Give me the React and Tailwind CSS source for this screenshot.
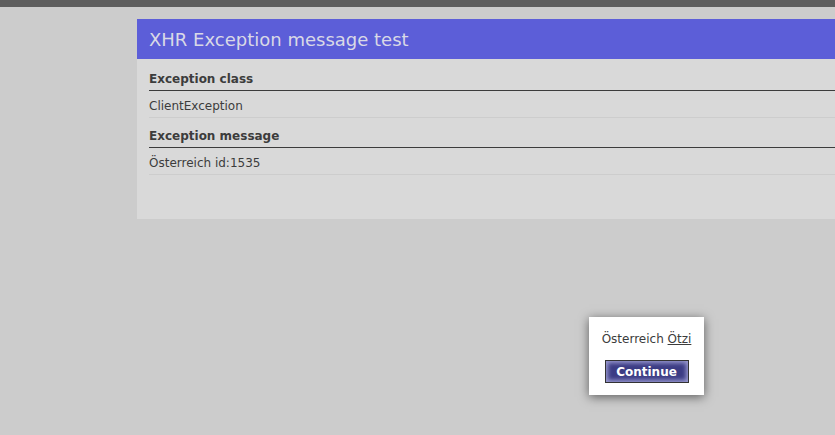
export default function App() {
  const font = { fontFamily: '"DejaVu Sans", Verdana, sans-serif' }
  return (
    <div className="relative h-[435px] w-[835px] overflow-hidden bg-[#cccccc] text-[#3c3c3c]" style={font}>
      <div className="h-[7px] bg-[#5e5e5e]" />
      <div className="ml-[137px] mt-[12px] bg-[#d9d9d9]">
        <div className="flex h-[40px] items-center bg-[#5c5ed8] pl-[12px] pt-[1px] text-[18px] text-[#d9d9e6]">
          XHR Exception message test
        </div>
        <div className="pl-[12px] pt-[2px] pb-[44px]">
          <div className="border-b border-[#3c3c3c] pt-[10px] pb-[3px] text-[12px] font-bold leading-[16px]">
            Exception class
          </div>
          <div className="border-b border-[#cdcdcd] pt-[7px] pb-[3px] text-[12px] leading-[16px]">ClientException</div>
          <div className="border-b border-[#3c3c3c] pt-[10px] pb-[3px] text-[12px] font-bold leading-[16px]">
            Exception message
          </div>
          <div className="border-b border-[#cdcdcd] pt-[7px] pb-[3px] text-[12px] leading-[16px]">Österreich id:1535</div>
        </div>
      </div>

      <div className="absolute left-[589px] top-[317px] flex h-[78px] w-[115px] flex-col items-center bg-white pt-[14px] shadow-[0_2px_10px_rgba(0,0,0,0.55)]">
        <div className="text-[12px] leading-[16px] text-[#3c3c3c]">
          Österreich <span className="underline">Ötzi</span>
        </div>
        <button
          className="mt-[13px] h-[23px] w-[84px] border border-[#333333] bg-[#3c3c84] text-[12px] font-bold text-white shadow-[inset_0_0_4px_2px_#9a9ad0]"
          style={font}
        >
          Continue
        </button>
      </div>
    </div>
  )
}
